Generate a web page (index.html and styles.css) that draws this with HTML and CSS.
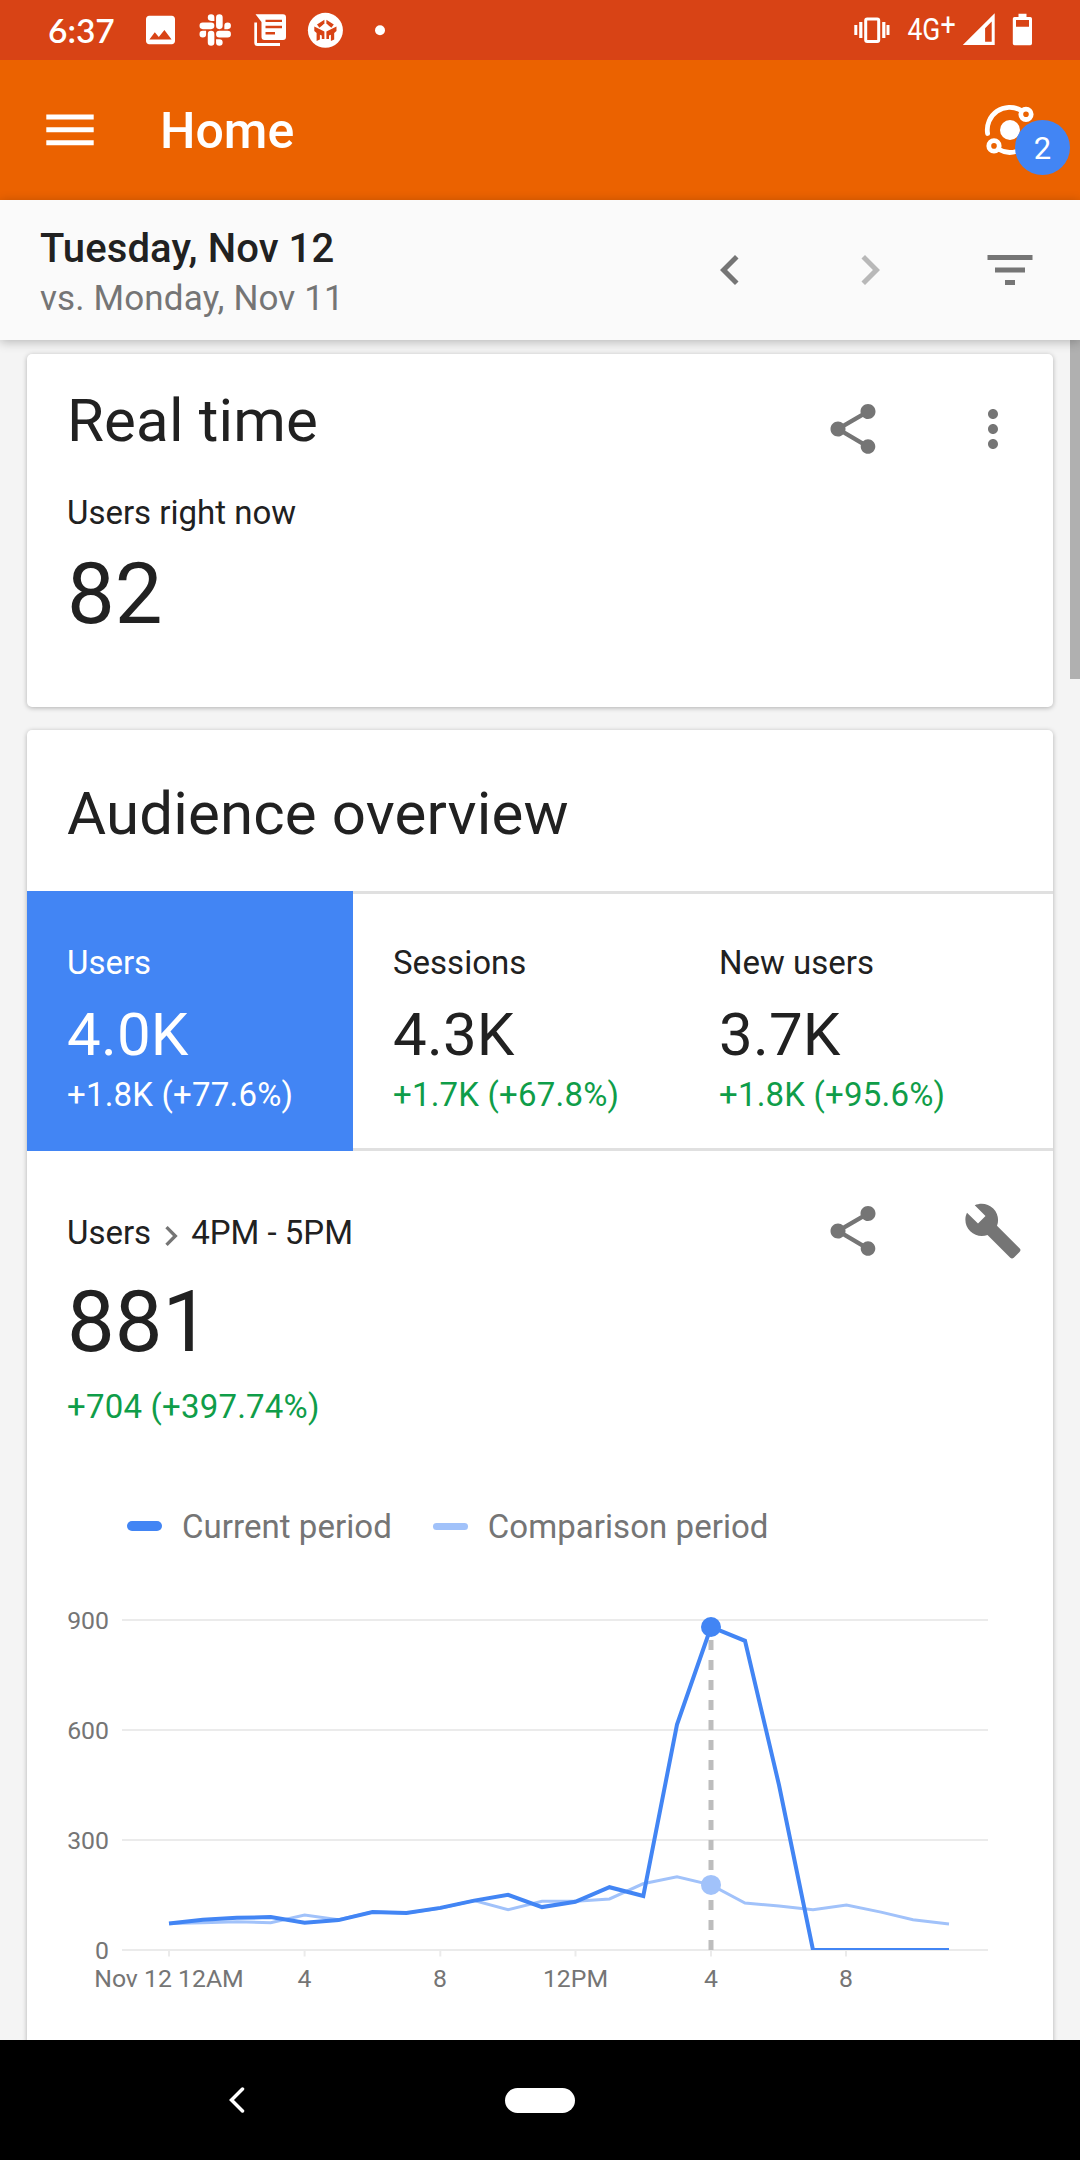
FILE: index.html
```html
<!DOCTYPE html>
<html lang="en">
<head>
  <meta charset="UTF-8" />
  <meta name="viewport" content="width=device-width, initial-scale=1.0" />
  <title>Home</title>
  <link rel="stylesheet" href="styles.css">
</head>
<body>
  <svg class="defs" width="0" height="0">
    <symbol id="share" viewBox="0 0 24 24">
      <path d="M18 16.08c-.76 0-1.44.3-1.96.77L8.91 12.7c.05-.23.09-.46.09-.7s-.04-.47-.09-.7l7.05-4.11c.54.5 1.25.81 2.04.81 1.66 0 3-1.34 3-3s-1.34-3-3-3-3 1.34-3 3c0 .24.04.47.09.7L8.04 9.81C7.5 9.31 6.79 9 6 9c-1.66 0-3 1.34-3 3s1.34 3 3 3c.79 0 1.5-.31 2.04-.81l7.12 4.16c-.05.21-.08.43-.08.65 0 1.61 1.31 2.92 2.92 2.92s2.92-1.31 2.92-2.92-1.31-2.92-2.92-2.92z"/>
    </symbol>
    <symbol id="chevronRight" viewBox="0 0 24 24">
      <path d="M10 6L8.59 7.41 13.17 12l-4.58 4.59L10 18l6-6z"/>
    </symbol>
  </svg>

  <!-- status bar -->
  <div class="status">
    <span class="clock">6:37</span>
    <svg class="status-left" width="250" height="60" viewBox="140 0 250 60">
      <path d="M175 41V19c0-1.800-1.400-3.200-3.200-3.200H149.200c-1.800 0-3.200 1.400-3.200 3.200V41c0 1.800 1.400 3.200 3.200 3.200H171.800c1.800 0 3.200-1.400 3.200-3.200zM154.800 32.300l4 4.800 5.600-7.200 7.200 9.600H149.400z"/>
      <g transform="translate(199.500 14.300) scale(1.310)">
        <path d="M5.042 15.165a2.528 2.528 0 0 1-2.52 2.523A2.528 2.528 0 0 1 0 15.165a2.527 2.527 0 0 1 2.522-2.520h2.520v2.520zM6.313 15.165a2.527 2.527 0 0 1 2.521-2.520 2.527 2.527 0 0 1 2.521 2.520v6.313A2.528 2.528 0 0 1 8.834 24a2.528 2.528 0 0 1-2.521-2.522v-6.313zM8.834 5.042a2.528 2.528 0 0 1-2.521-2.520A2.528 2.528 0 0 1 8.834 0a2.528 2.528 0 0 1 2.521 2.522v2.520H8.834zM8.834 6.313a2.528 2.528 0 0 1 2.521 2.521 2.528 2.528 0 0 1-2.521 2.521H2.522A2.528 2.528 0 0 1 0 8.834a2.528 2.528 0 0 1 2.522-2.521h6.312zM18.956 8.834a2.528 2.528 0 0 1 2.522-2.521A2.528 2.528 0 0 1 24 8.834a2.528 2.528 0 0 1-2.522 2.521h-2.522V8.834zM17.688 8.834a2.528 2.528 0 0 1-2.523 2.521 2.527 2.527 0 0 1-2.520-2.521V2.522A2.527 2.527 0 0 1 15.165 0a2.528 2.528 0 0 1 2.523 2.522v6.312zM15.165 18.956a2.528 2.528 0 0 1 2.523 2.522A2.528 2.528 0 0 1 15.165 24a2.527 2.527 0 0 1-2.520-2.522v-2.522h2.520zM15.165 17.688a2.527 2.527 0 0 1-2.520-2.523 2.526 2.526 0 0 1 2.520-2.520h6.313A2.527 2.527 0 0 1 24 15.165a2.528 2.528 0 0 1-2.522 2.523h-6.313z"/>
      </g>
      <path fill-rule="evenodd" d="M255.500 14.300H283q3 0 3 3V37q0 3-3 3H264.500q-3 0-3-3V22zM265.500 19.700v2.400h16.500v-2.400zM265.500 25.800v2.400h16.500v-2.400zM265.500 32v2.600h9.500v-2.600z"/>
      <path d="M254.300 22.500h2.700V43h23v3H257.300q-3 0-3-3z"/>
      <circle cx="325.400" cy="30.300" r="17.500"/>
      <path class="cut" d="M317 24.500l7.400-4.700v4l-5 4zM333.800 24.500l-7.400-4.700v4l5 4zM314.300 26.500l10.100 5V39h-2.600v-3.500l-1.900-.8v4.800l-3.300 1.500v-8l-2.300-2zM336.500 26.500l-10.100 5V39h2.600v-3.500l1.900-.8v6.300l3.300-1.500V33l2.300-2z"/>
      <circle cx="325.400" cy="27" r="3"/>
      <circle cx="380" cy="30.200" r="5"/>
    </svg>
    <svg class="status-right" width="190" height="60" viewBox="850 0 190 60">
      <rect class="line" x="865.700" y="19" width="13" height="22.500" rx="1.500"/>
      <path d="M854.300 25h3v10h-3zM859.200 22h3.200v16h-3.200zM882.200 22h3.200v16h-3.200zM886.500 25h3v10h-3z"/>
      <text class="net" transform="translate(907.500 40.300) scale(.84 1)">4G<tspan class="plus" dy="-5">+</tspan></text>
      <path fill-rule="evenodd" d="M994.700 13.300V45H962.800zM991.700 21.500l-6.600 6.700v13.500h6.600z"/>
      <path fill-rule="evenodd" d="M1018.500 13.700h8v3.300h3.800q1.700 0 1.700 1.700V43.600q0 1.700-1.700 1.700h-15.800q-1.700 0-1.700-1.700V18.700q0-1.700 1.700-1.700h4zM1016 20v6.700h13V20z"/>
    </svg>
  </div>

  <!-- app bar -->
  <div class="appbar">
    <svg class="menu" width="48" height="32" viewBox="0 0 48 32">
      <path d="M.300 .500h47.400v5H.300zM.300 13.300h47.400v5H.300zM.300 26.200h47.400v5H.300z"/>
    </svg>
    <h1>Home</h1>
    <div class="insights">
      <svg width="60" height="60" viewBox="980 100 60 60">
        <circle class="fill" cx="1010" cy="130" r="10"/>
        <path d="M987.600 133.500A22.500 22.500 0 0 1 1021 110.300M998.500 149.300A22.500 22.500 0 0 0 1030 140"/>
        <circle cx="1026" cy="114.300" r="5.200"/>
        <circle cx="994" cy="145.900" r="5.200"/>
      </svg>
      <span class="badge">2</span>
    </div>
  </div>

  <!-- date range -->
  <div class="datebar">
    <div class="dates">
      <div class="date">Tuesday, Nov 12</div>
      <div class="versus">vs. Monday, Nov 11</div>
    </div>
    <div class="actions">
      <svg class="icon" viewBox="0 0 24 24"><path d="M15.410 7.410L14 6l-6 6 6 6 1.410-1.410L10.830 12z"/></svg>
      <svg class="icon disabled"><use href="#chevronRight"/></svg>
      <svg class="icon" viewBox="0 0 24 24"><path d="M10 18h4v-2h-4v2zM3 6v2h18V6H3zm3 7h12v-2H6v2z"/></svg>
    </div>
  </div>

  <div class="content">
    <div class="scrollbar"></div>

    <div class="card realtime">
      <div>
        <h2>Real time</h2>
        <div class="label">Users right now</div>
        <div class="big">82</div>
      </div>
      <div class="actions">
        <svg class="icon"><use href="#share"/></svg>
        <svg class="icon" viewBox="0 0 24 24"><path d="M12 8c1.100 0 2-.900 2-2s-.900-2-2-2-2 .900-2 2 .900 2 2 2zm0 2c-1.100 0-2 .900-2 2s.900 2 2 2 2-.900 2-2-.900-2-2-2zm0 6c-1.100 0-2 .900-2 2s.900 2 2 2 2-.900 2-2-.900-2-2-2z"/></svg>
      </div>
    </div>

    <div class="card audience">
      <h2>Audience overview</h2>
      <div class="tabs">
        <div class="tab active">
          <div class="label">Users</div>
          <div class="value">4.0K</div>
          <div class="delta">+1.8K (+77.6%)</div>
        </div>
        <div class="tab">
          <div class="label">Sessions</div>
          <div class="value">4.3K</div>
          <div class="delta">+1.7K (+67.8%)</div>
        </div>
        <div class="tab">
          <div class="label">New users</div>
          <div class="value">3.7K</div>
          <div class="delta">+1.8K (+95.6%)</div>
        </div>
      </div>

      <div class="detail">
        <div>
          <div class="crumb">
            <span>Users</span>
            <svg class="crumb-icon"><use href="#chevronRight"/></svg>
            <span>4PM - 5PM</span>
          </div>
          <div class="big">881</div>
          <div class="delta">+704 (+397.74%)</div>
        </div>
        <div class="actions">
          <svg class="icon"><use href="#share"/></svg>
          <svg class="icon" viewBox="0 0 24 24"><path d="M22.700 19l-9.100-9.100c.900-2.300.400-5-1.500-6.900-2-2-5-2.400-7.400-1.300L9 6 6 9 1.600 4.700C.400 7.100.900 10.100 2.900 12.100c1.900 1.900 4.600 2.400 6.900 1.500l9.100 9.100c.400.400 1 .400 1.400 0l2.300-2.300c.500-.400.500-1.100.100-1.400z"/></svg>
        </div>
      </div>

      <div class="legend">
        <span class="swatch current"></span>
        <span>Current period</span>
        <span class="swatch comparison"></span>
        <span>Comparison period</span>
      </div>

      <svg class="chart" width="1026" height="480" viewBox="0 0 1026 480">
        <clipPath id="plot"><path d="M95 40h866v350H95z"/></clipPath>
        <path class="grid" d="M95 60h866M95 170h866M95 280h866M95 390h866M142 390v6.500M277.600 390v6.500M413.300 390v6.500M548.500 390v6.500M684 390v6.500M819 390v6.500"/>
        <path class="marker" d="M684 390V70"/>
        <g clip-path="url(#plot)">
          <polyline class="comparison-line" points="142,363.600 175.900,362.800 209.800,361.700 243.700,362.800 277.600,355.100 311.600,359.700 345.500,352.100 379.400,352.900 413.300,348.300 447.200,340.600 481.100,349.800 515,341.200 548.900,341.200 582.500,338.900 616,323.800 650,316.900 684,324.900 718,343 752,346 786,349.800 819.500,345 854,352.100 886,359.700 922,364"/>
          <polyline class="current-line" points="142,363.600 175.900,359.700 209.800,357.800 243.700,357.100 277.600,362.800 311.600,360.100 345.500,352.100 379.400,352.900 413.300,347.900 447.200,340.600 481.100,334.900 515,347.100 548.300,341.800 582.500,327.200 616.300,336 650,164.600 684,67 718,80.800 752,225 786,390 922,390"/>
        </g>
        <circle class="comparison-dot" cx="684" cy="324.900" r="10"/>
        <circle class="current-dot" cx="684" cy="67" r="10"/>
        <g class="y-labels">
          <text x="82" y="69">900</text>
          <text x="82" y="179">600</text>
          <text x="82" y="289">300</text>
          <text x="82" y="399">0</text>
        </g>
        <g class="x-labels">
          <text x="142" y="427">Nov 12 12AM</text>
          <text x="277.500" y="427">4</text>
          <text x="413" y="427">8</text>
          <text x="548.500" y="427">12PM</text>
          <text x="684" y="427">4</text>
          <text x="819" y="427">8</text>
        </g>
      </svg>
    </div>
  </div>

  <!-- system navigation -->
  <div class="navbar">
    <svg width="16" height="26" viewBox="0 0 16 26"><path d="M13.500 2L2.500 13l11 11"/></svg>
    <span class="pill"></span>
  </div>
</body>
</html>
```

FILE: styles.css
```css
* {
  box-sizing: border-box;
}
body {
  margin: 0;
  width: 1080px;
  height: 2160px;
  display: flex;
  flex-direction: column;
  overflow: hidden;
  font-family: Roboto, "Liberation Sans", sans-serif;
  color: #212121;
  background: #f4f4f4;
}
h1, h2 {
  margin: 0;
}
svg {
  display: block;
  flex-shrink: 0;
}
.defs {
  position: absolute;
}

/* status bar */
.status {
  height: 60px;
  flex-shrink: 0;
  display: flex;
  background: #d84315;
  color: #fff;
  fill: #fff;
}
.clock {
  width: 140px;
  padding-left: 48px;
  font-family: Lato, sans-serif;
  font-weight: 600;
  font-size: 33.5px;
  line-height: 60px;
}
.status-right {
  margin-left: 460px;
}
.cut {
  fill: #d84315;
}
.line {
  fill: none;
  stroke: #fff;
  stroke-width: 3;
}
.net {
  font-size: 31.5px;
}
.plus {
  font-size: 32px;
}

/* app bar */
.appbar {
  height: 140px;
  flex-shrink: 0;
  display: flex;
  align-items: center;
  padding: 0 40px 0 46px;
  background: #eb6200;
  color: #fff;
}
.menu {
  fill: #fff;
}
.appbar h1 {
  margin: 2px 0 0 66px;
  font-size: 50px;
  font-weight: 500;
  line-height: 60px;
}
.insights {
  position: relative;
  margin-left: auto;
}
.insights svg {
  fill: none;
  stroke: #fff;
  stroke-width: 4.8;
  stroke-linecap: round;
}
.insights .fill {
  fill: #fff;
  stroke: none;
}
.badge {
  position: absolute;
  left: 35px;
  top: 20px;
  width: 55px;
  height: 55px;
  border-radius: 50%;
  background: #4285f4;
  font-size: 31px;
  line-height: 58px;
  text-align: center;
}

/* date range */
.datebar {
  height: 140px;
  flex-shrink: 0;
  display: flex;
  justify-content: space-between;
  align-items: flex-start;
  padding: 24px 40px 0;
  position: relative;
  z-index: 1;
  background: #fafafa;
  box-shadow: 0 2px 10px rgba(0, 0, 0, 0.25);
}
.date {
  font-size: 40px;
  font-weight: 500;
  line-height: 50px;
  letter-spacing: 0.1px;
}
.versus {
  font-size: 35px;
  line-height: 50px;
  letter-spacing: 0.15px;
  color: #757575;
}
.actions {
  display: flex;
  gap: 80px;
}
.datebar .actions {
  margin-top: 16px;
}
.icon {
  width: 60px;
  height: 60px;
  fill: #757575;
}
.disabled {
  fill: #b8b8b8;
}

/* cards */
.content {
  flex: 1;
  min-height: 0;
  position: relative;
  padding: 14px 27px 0;
  display: flex;
  flex-direction: column;
  gap: 23px;
  overflow: hidden;
}
.scrollbar {
  position: absolute;
  top: 0;
  right: 0;
  width: 10px;
  height: 339px;
  background: #b0b0b0;
}
.card {
  flex-shrink: 0;
  background: #fff;
  border-radius: 5px;
  box-shadow: 0 1px 5px rgba(0, 0, 0, 0.28);
}
.card h2 {
  font-size: 60px;
  font-weight: 400;
  line-height: 72px;
  letter-spacing: 0.15px;
}
.realtime {
  height: 353px;
  display: flex;
  justify-content: space-between;
  padding: 31px 30px 0 40px;
}
.realtime .actions {
  margin-top: 14px;
}
.label, .delta, .crumb {
  font-size: 33px;
  line-height: 40px;
}
.realtime .label {
  margin-top: 36px;
}
.big {
  font-size: 85px;
  line-height: 90px;
}
.realtime .big {
  margin-top: 16px;
}
.audience {
  height: 1400px;
}
.audience h2 {
  height: 161px;
  padding: 48px 40px 0;
}
.delta {
  letter-spacing: 0.2px;
  color: #0f9d49;
}

/* metric tabs */
.tabs {
  height: 260px;
  display: flex;
  background: #fff;
  border-top: 3px solid #e0e0e0;
  border-bottom: 3px solid #e0e0e0;
}
.tab {
  width: 326px;
  padding: 49px 0 0 40px;
}
.active {
  margin: -3px 0;
  padding-top: 52px;
  background: #4285f4;
  color: #fff;
}
.active .delta {
  color: #fff;
}
.value {
  margin: 16px 0 4px;
  font-size: 60px;
  line-height: 72px;
  letter-spacing: 0.2px;
}

/* selected metric */
.detail {
  height: 275px;
  display: flex;
  justify-content: space-between;
  padding: 62px 30px 0 40px;
}
.detail .actions {
  margin-top: -12px;
}
.crumb {
  display: flex;
  height: 40px;
}
.crumb-icon {
  width: 40px;
  height: 40px;
  margin-top: 3px;
  fill: #757575;
}
.detail .big {
  margin: 24px 0 20px;
}
.legend {
  display: flex;
  align-items: center;
  height: 40px;
  margin: 80px 0 14px;
  padding-left: 100px;
  font-size: 33px;
  letter-spacing: 0.05px;
  color: #757575;
}
.swatch {
  width: 35px;
  margin-right: 20px;
  border-radius: 5px;
}
.current {
  height: 10px;
  background: #4285f4;
}
.comparison {
  height: 7px;
  margin-left: 41px;
  background: #a1c2fa;
}

/* chart */
.chart {
  fill: none;
  font-size: 24.8px;
}
.grid {
  stroke: #ebebeb;
  stroke-width: 2;
}
.marker {
  stroke: #bdbdbd;
  stroke-width: 5;
  stroke-dasharray: 10 10;
}
.comparison-line {
  stroke: #a1c2fa;
  stroke-width: 3;
}
.current-line {
  stroke: #4285f4;
  stroke-width: 4;
}
.comparison-dot {
  fill: #a1c2fa;
}
.current-dot {
  fill: #4285f4;
}
.y-labels {
  fill: #757575;
  text-anchor: end;
}
.x-labels {
  fill: #757575;
  text-anchor: middle;
}

/* system navigation */
.navbar {
  height: 120px;
  flex-shrink: 0;
  display: flex;
  align-items: center;
  padding-left: 229px;
  background: #000;
}
.navbar svg {
  fill: none;
  stroke: #fff;
  stroke-width: 3.5;
  stroke-linecap: round;
}
.pill {
  width: 70px;
  height: 25px;
  margin-left: 260px;
  border-radius: 13px;
  background: #fff;
}
```
